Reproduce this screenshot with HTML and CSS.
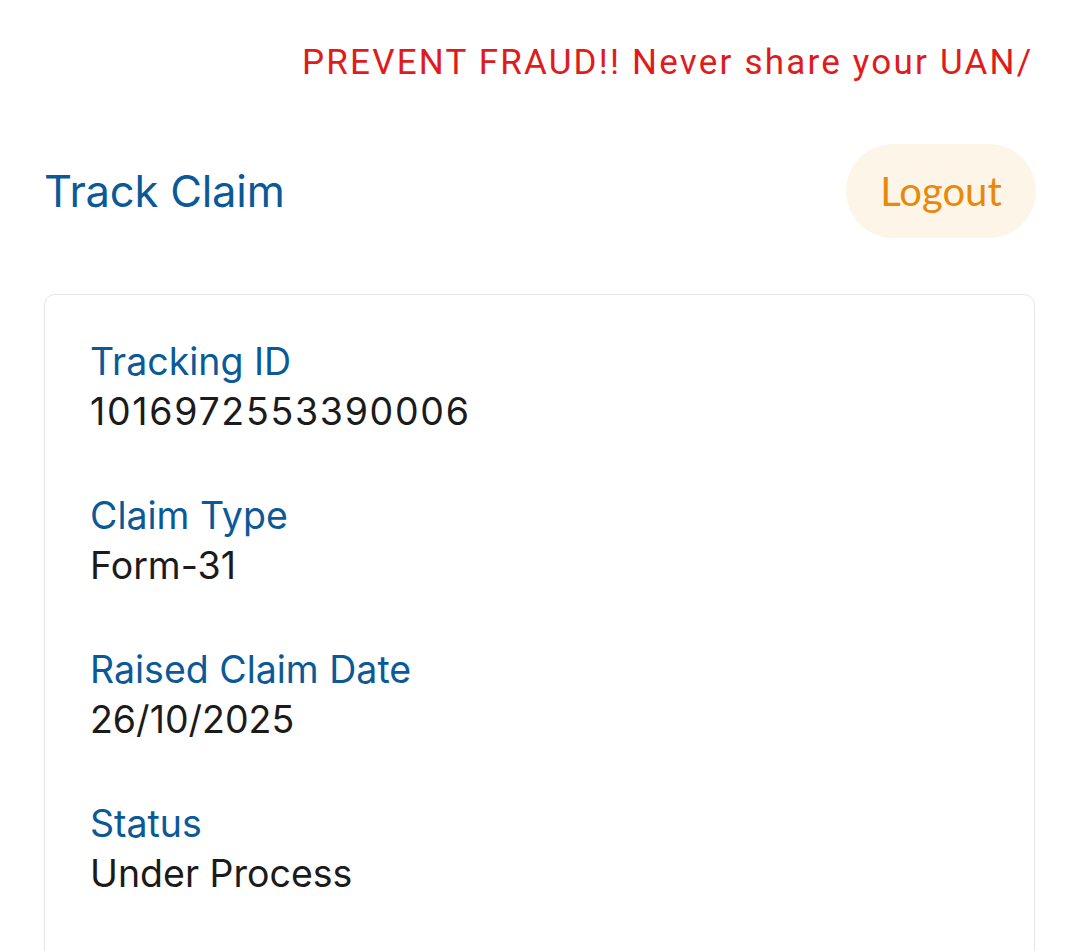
FILE: index.html
```html
<!DOCTYPE html>
<html lang="en">
<head>
<meta charset="utf-8">
<title>Track Claim</title>
<link rel="stylesheet" href="styles.css">
</head>
<body>
<div class="page">
  <div class="ticker">
    <div class="ticker-text">PREVENT FRAUD!! Never share your UAN/PAN/Aadhaar/Bank details or OTP with anyone.</div>
  </div>
  <header class="header">
    <h1 class="title">Track Claim</h1>
    <button class="logout">Logout</button>
  </header>
  <section class="card">
    <div class="field">
      <div class="label">Tracking ID</div>
      <div class="value value-id">1016972553390006</div>
    </div>
    <div class="field">
      <div class="label">Claim Type</div>
      <div class="value">Form-31</div>
    </div>
    <div class="field">
      <div class="label">Raised Claim Date</div>
      <div class="value">26/10/2025</div>
    </div>
    <div class="field">
      <div class="label">Status</div>
      <div class="value">Under Process</div>
    </div>
  </section>
</div>
</body>
</html>
```
FILE: styles.css
```css
html, body {
  margin: 0;
  padding: 0;
  background: #ffffff;
}
body {
  font-family: "Inter", "Noto Sans", sans-serif;
  overflow: hidden;
  height: 951px;
}
.page {
  padding: 0 44px 0 44px;
}
.ticker {
  height: 126px;
  overflow: hidden;
  display: flex;
  align-items: center;
}
.ticker-text {
  font-family: "Roboto", sans-serif;
  font-size: 35px;
  letter-spacing: 2.2px;
  color: #e01b1b;
  white-space: nowrap;
  padding-left: 258px;
  margin-top: -2px;
}
.header {
  display: flex;
  justify-content: space-between;
  align-items: center;
  height: 94px;
  margin-top: 18px;
}
.title {
  margin: 0;
  font-weight: 400;
  font-size: 43.5px;
  color: #0b5a98;
  letter-spacing: -0.2px;
}
.logout {
  width: 190px;
  height: 94px;
  border: none;
  border-radius: 47px;
  background: #fdf6e8;
  color: #e8890c;
  font-family: "Lato", sans-serif;
  font-size: 40px;
  padding: 0;
  margin-right: -1px;
}
.card {
  margin-top: 56px;
  border: 1.5px solid #e6e6e6;
  border-radius: 11px;
  padding: 42px 46px 0 45px;
  height: 800px;
}
.field {
  margin-bottom: 54px;
}
.label {
  font-size: 37.5px;
  color: #0b5a98;
  line-height: 50px;
}
.value {
  font-size: 37.5px;
  color: #1b1b1b;
  line-height: 50px;
}
.value-id {
  letter-spacing: 1.7px;
}
```
